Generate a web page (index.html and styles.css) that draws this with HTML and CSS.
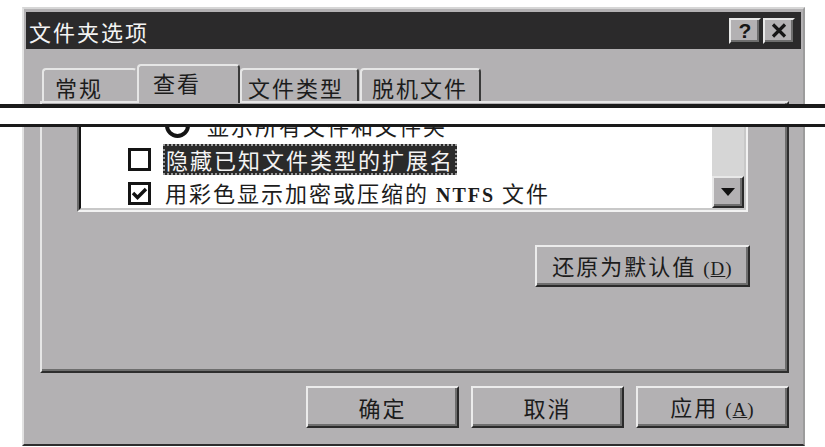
FILE: index.html
```html
<!DOCTYPE html>
<html lang="zh-CN">
<head>
<meta charset="utf-8">
<title>文件夹选项</title>
<link rel="stylesheet" href="styles.css">
</head>
<body>
<div class="dialog">
  <div class="titlebar">
    <span class="title">文件夹选项</span>
    <div class="tb-buttons">
      <span class="tb-btn help">?</span>
      <span class="tb-btn close"><svg width="16" height="15" viewBox="0 0 16 15"><path d="M2 1.5 L14 13.5 M14 1.5 L2 13.5" stroke="#161616" stroke-width="3.2" fill="none"/></svg></span>
    </div>
  </div>
  <div class="content">
    <div class="tabs">
      <div class="tab t1">常规</div>
      <div class="tab t2 active">查看</div>
      <div class="tab t3">文件类型</div>
      <div class="tab t4">脱机文件</div>
    </div>
    <div class="panel">
      <div class="list">
        <div class="list-inner">
          <div class="rows">
            <div class="row radio-row"><span class="radio"></span><span class="label">显示所有文件和文件夹</span></div>
            <div class="row"><span class="check"></span><span class="label sel">隐藏已知文件类型的扩展名</span></div>
            <div class="row"><span class="check"><svg width="17" height="15" viewBox="0 0 17 15"><path d="M2 7 L6.5 11.5 L15 3" stroke="#111" stroke-width="3.4" fill="none"/></svg></span><span class="label">用彩色显示加密或压缩的 <span class="latin">NTFS</span> 文件</span></div>
          </div>
          <div class="scrollbar">
            <div class="track"></div>
            <div class="sb-btn"><svg width="14" height="8" viewBox="0 0 14 8"><path d="M0 0 H14 L7 8 Z" fill="#111"/></svg></div>
          </div>
        </div>
      </div>
      <div class="restore-row">
        <button class="btn restore"><span class="btn-text">还原为默认值 <span class="latin key">(<u>D</u>)</span></span></button>
      </div>
    </div>
    <div class="footer">
      <button class="btn"><span class="btn-text">确定</span></button>
      <button class="btn"><span class="btn-text">取消</span></button>
      <button class="btn"><span class="btn-text">应用 <span class="latin key">(<u>A</u>)</span></span></button>
    </div>
  </div>
</div>
<div class="cut"></div>
</body>
</html>
```

FILE: styles.css
```css
* { box-sizing: border-box; }
html, body { margin: 0; padding: 0; }
body {
  width: 825px;
  height: 447px;
  background: #ffffff;
  overflow: hidden;
  position: relative;
  font-family: "Noto Sans CJK SC", "Noto Sans", sans-serif;
  color: #1c1c1c;
}

.dialog {
  margin: 7px 0 0 22px;
  width: 783px;
  height: 439px;
  background: #b3b1b3;
  border: 2px solid;
  border-color: #d6d6d6 #9c9c9c #2e2e2e #e2e2e2;
  display: flex;
  flex-direction: column;
}

.titlebar {
  margin: 3px 2px 0 2px;
  height: 37px;
  background: #2b2a2b;
  display: flex;
  align-items: center;
  justify-content: space-between;
  padding: 0 6px 0 3px;
}
.title {
  font-size: 22px;
  letter-spacing: 2px;
  line-height: 1;
  color: #f4f4f4;
}
.tb-buttons { display: flex; gap: 2px; }
.tb-btn {
  width: 32px;
  height: 26px;
  background: #b3b1b3;
  border: 2px solid;
  border-color: #e8e8e8 #2a2a2a #2a2a2a #e8e8e8;
  box-shadow: inset -2px -2px 0 #6e6e6e;
  display: flex;
  align-items: center;
  justify-content: center;
}
.help {
  font-family: "Liberation Sans", sans-serif;
  font-weight: bold;
  font-size: 21px;
  line-height: 1;
  color: #161616;
  padding-bottom: 1px;
}

.content {
  flex: 1;
  display: flex;
  flex-direction: column;
  padding: 0 14px 0 16px;
}

.tabs {
  margin-top: 15px;
  height: 37px;
  display: flex;
  align-items: flex-end;
  padding-left: 2px;
  position: relative;
  z-index: 1;
}
.tab {
  height: 33px;
  font-size: 22px;
  letter-spacing: 2px;
  line-height: 1;
  display: flex;
  align-items: center;
  padding-top: 2px;
  border: 2px solid;
  border-bottom: none;
  border-color: #e6e6e6 #3a3a3a #e6e6e6 #e6e6e6;
  border-radius: 4px 4px 0 0;
  background: #b3b1b3;
}
.tab.active {
  height: 39px;
  margin-bottom: -2px;
  padding-top: 0;
  padding-bottom: 6px;
}
.t1 { width: 95px; padding-left: 11px; border-right-color: #b3b1b3; }
.t2 { width: 103px; padding-left: 14px; }
.t3 { width: 119px; padding-left: 6px; }
.t4 { width: 121px; padding-left: 10px; margin-left: 1px; }

.panel {
  height: 272px;
  border: 2px solid;
  border-color: #e6e6e6 #2e2e2e #2e2e2e #e6e6e6;
  box-shadow: inset -2px -2px 0 #6e6e6e;
  padding: 1px 39px 0 35px;
  display: flex;
  flex-direction: column;
}

.list {
  height: 108px;
  border: 2px solid;
  border-color: #6a6a6a #f2f2f2 #f2f2f2 #6a6a6a;
}
.list-inner {
  height: 100%;
  border: 2px solid;
  border-color: #141414 #c8c8c8 #c8c8c8 #141414;
  display: flex;
  overflow: hidden;
}
.rows {
  flex: 1;
  background: #ffffff;
  overflow: hidden;
}
.row {
  height: 34px;
  display: flex;
  align-items: center;
  padding-left: 47px;
  font-size: 22px;
  letter-spacing: 2px;
  line-height: 1;
  white-space: nowrap;
}
.radio-row { padding-left: 84px; }
.radio {
  width: 25px;
  height: 25px;
  border: 4px solid #141414;
  border-radius: 50%;
  background: #fff;
  flex: none;
}
.radio-row .label { margin-left: 15px; }
.check {
  width: 23px;
  height: 23px;
  border: 3px solid #141414;
  background: #fff;
  flex: none;
  display: flex;
  align-items: center;
  justify-content: center;
}
.label {
  margin-left: 12px;
  padding: 0 2px;
}
.label.sel {
  background: #2a2a2a;
  color: #f4f4f4;
  height: 31px;
  display: flex;
  align-items: center;
  border: 2px dotted #9a9a9a;
  padding: 0 1px;
}
.latin {
  font-family: "Liberation Serif", serif;
  font-weight: bold;
  font-size: 20px;
  letter-spacing: 2px;
}

.scrollbar {
  width: 32px;
  display: flex;
  flex-direction: column;
}
.track { flex: 1; background: #d6d6d6; }
.sb-btn {
  height: 32px;
  background: #b3b1b3;
  border: 2px solid;
  border-color: #e8e8e8 #2a2a2a #2a2a2a #e8e8e8;
  box-shadow: inset -2px -2px 0 #6e6e6e;
  display: flex;
  align-items: center;
  justify-content: center;
}

.restore-row {
  margin-top: 33px;
  margin-right: -2px;
  display: flex;
  justify-content: flex-end;
}

.btn {
  height: 42px;
  background: #b3b1b3;
  border: 2px solid;
  border-color: #ececec #2a2a2a #2a2a2a #ececec;
  box-shadow: inset -2px -2px 0 #6e6e6e;
  font-family: "Noto Sans CJK SC", sans-serif;
  font-size: 22px;
  letter-spacing: 2px;
  line-height: 1;
  color: #1c1c1c;
  padding: 0;
  display: flex;
  align-items: center;
  justify-content: center;
}
.btn-text { white-space: nowrap; }
.key {
  font-weight: normal;
  font-size: 19px;
  letter-spacing: 1px;
}
.restore { width: 215px; }

.footer {
  margin-top: 13px;
  display: flex;
  justify-content: flex-end;
  gap: 12px;
}
.footer .btn { width: 153px; }

.cut {
  position: absolute;
  left: 0;
  top: 104px;
  width: 825px;
  height: 23px;
  background: #ffffff;
  border-top: 4px solid #1a1a1a;
  border-bottom: 3px solid #1a1a1a;
}
```
